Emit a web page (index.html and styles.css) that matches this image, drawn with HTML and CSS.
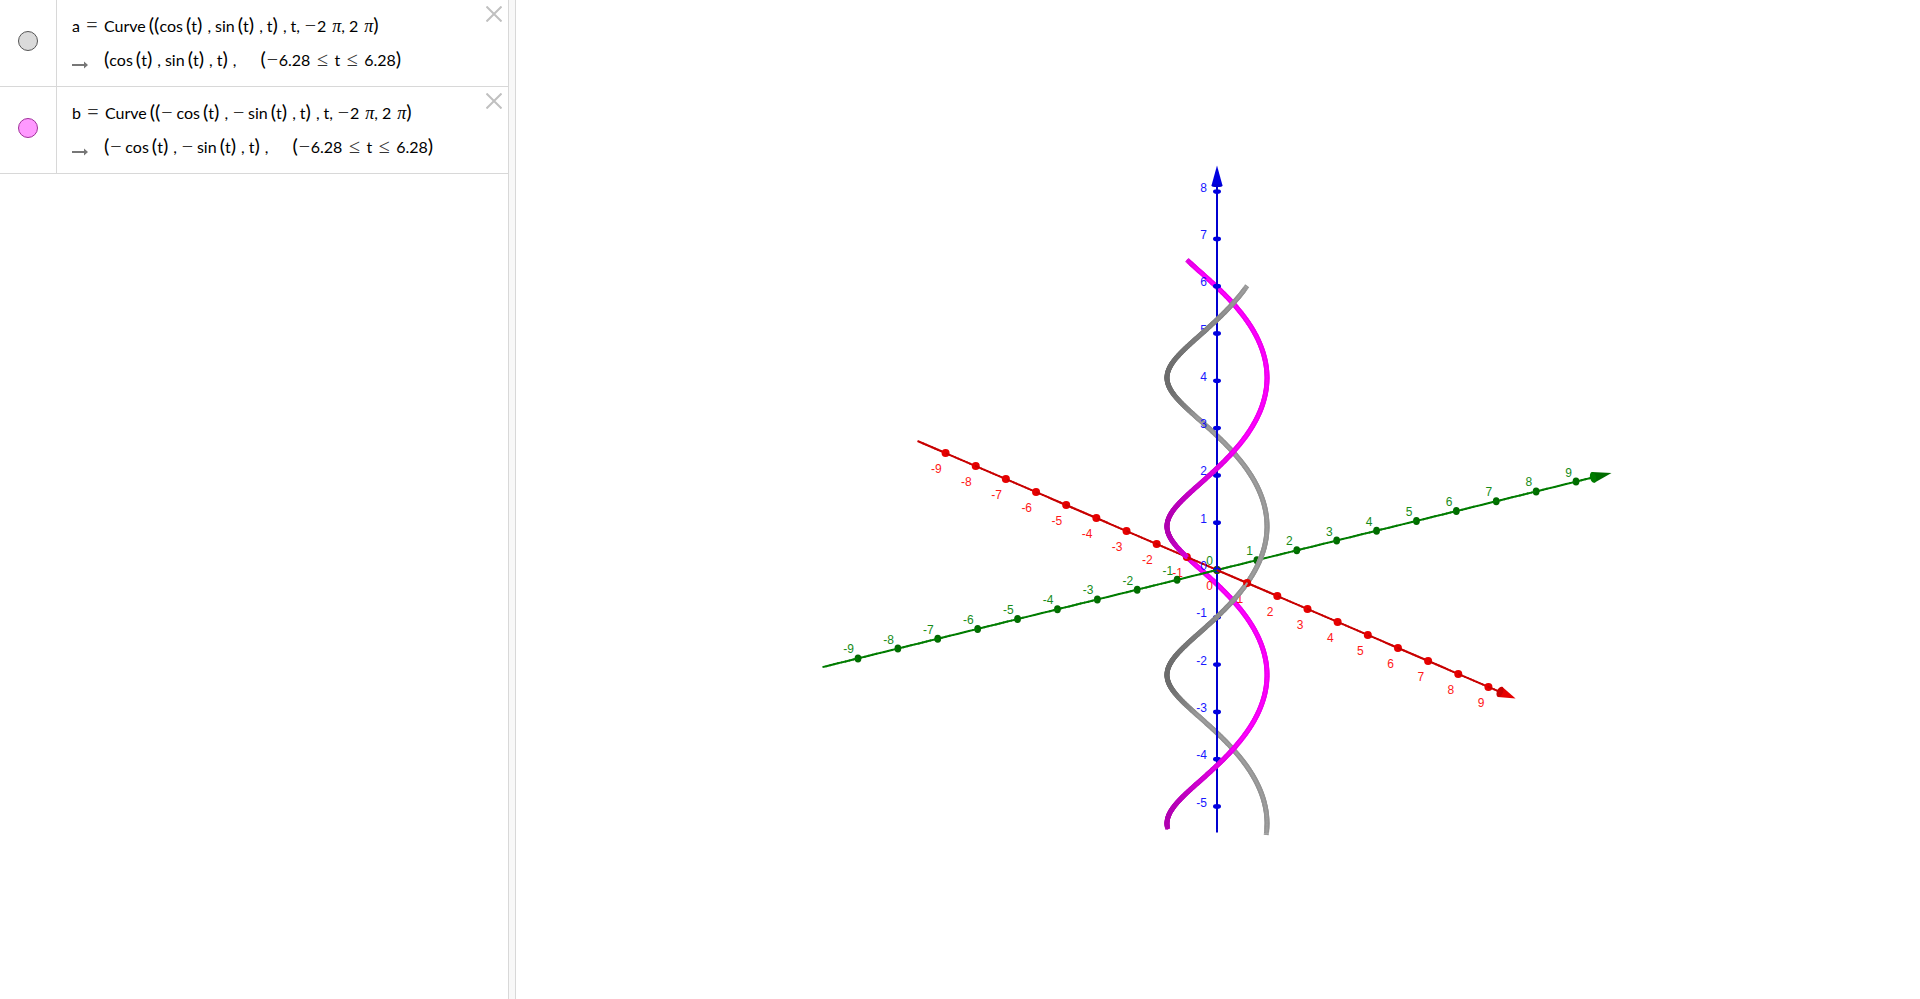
FILE: index.html
```html
<!DOCTYPE html>
<html lang="en">
<head>
<meta charset="utf-8">
<title>3D Calculator</title>
<link rel="stylesheet" href="styles.css">
</head>
<body>
<div class="app">
  <aside class="algebra" aria-label="Algebra">
    <section class="row">
      <div class="marble-cell"><button class="marble marble-a" type="button" aria-label="Show or hide a"></button></div>
      <div class="formulas">
        <div class="line"><span>a</span><span class="rel">=</span><span>Curve</span><span class="par gap">((</span><span>cos</span><span class="par gap">(</span>t<span class="par">)</span><span class="comma">,</span><span>sin</span><span class="par gap">(</span>t<span class="par">)</span><span class="comma">,</span>t<span class="par">)</span><span class="comma">,</span>t<span class="sep">,</span><span class="minus">−</span>2<span class="pi">π</span><span class="sep">,</span>2<span class="pi">π</span><span class="par">)</span></div>
        <div class="line"><svg class="arrow" viewBox="0 0 16 8" aria-hidden="true"><path d="M0 3h12V0.500l4 3.500-4 3.500V5H0z"/></svg><span class="par">(</span><span>cos</span><span class="par gap">(</span>t<span class="par">)</span><span class="comma">,</span><span>sin</span><span class="par gap">(</span>t<span class="par">)</span><span class="comma">,</span>t<span class="par">)</span><span class="comma">,</span><span class="par quad">(</span><span class="minus">−</span>6.28<span class="rel">≤</span>t<span class="rel">≤</span>6.28<span class="par">)</span></div>
      </div>
      <button class="close" type="button" aria-label="Delete a"><svg viewBox="0 0 16 16"><path d="M0.500 0.500l15 15M15.500 0.500l-15 15"/></svg></button>
    </section>
    <section class="row">
      <div class="marble-cell"><button class="marble marble-b" type="button" aria-label="Show or hide b"></button></div>
      <div class="formulas">
        <div class="line"><span>b</span><span class="rel">=</span><span>Curve</span><span class="par gap">((</span><span class="minus wide">−</span><span>cos</span><span class="par gap">(</span>t<span class="par">)</span><span class="comma">,</span><span class="minus wide">−</span><span>sin</span><span class="par gap">(</span>t<span class="par">)</span><span class="comma">,</span>t<span class="par">)</span><span class="comma">,</span>t<span class="sep">,</span><span class="minus">−</span>2<span class="pi">π</span><span class="sep">,</span>2<span class="pi">π</span><span class="par">)</span></div>
        <div class="line"><svg class="arrow" viewBox="0 0 16 8" aria-hidden="true"><path d="M0 3h12V0.500l4 3.500-4 3.500V5H0z"/></svg><span class="par">(</span><span class="minus wide">−</span><span>cos</span><span class="par gap">(</span>t<span class="par">)</span><span class="comma">,</span><span class="minus wide">−</span><span>sin</span><span class="par gap">(</span>t<span class="par">)</span><span class="comma">,</span>t<span class="par">)</span><span class="comma">,</span><span class="par quad">(</span><span class="minus">−</span>6.28<span class="rel">≤</span>t<span class="rel">≤</span>6.28<span class="par">)</span></div>
      </div>
      <button class="close" type="button" aria-label="Delete b"><svg viewBox="0 0 16 16"><path d="M0.500 0.500l15 15M15.500 0.500l-15 15"/></svg></button>
    </section>
  </aside>
  <div class="splitter"></div>
  <main class="view">
    <svg id="plot" class="plot" viewBox="-701 -570 1404 999" preserveAspectRatio="xMidYMid slice" role="img" aria-label="Two helices around the z axis"></svg>
  </main>
</div>
<script src="plot.js"></script>
</body>
</html>
```
FILE: styles.css
```css
* { box-sizing: border-box; }
body { margin: 0; background: #fff; color: #000; font-family: Lato, "Noto Sans", sans-serif; }
button { padding: 0; background: none; border: 0; cursor: pointer; }

.app { display: flex; height: 100vh; overflow: hidden; }
.algebra { flex: 0 0 508px; }
.splitter { flex: 0 0 8px; background: #f8f8f8; border: solid #d8d8d8; border-width: 0 1px; }
.view { flex: 1; min-width: 0; }

.row { display: flex; align-items: stretch; border-bottom: 1px solid #d8d8d8; }
.marble-cell { flex: 0 0 57px; display: flex; align-items: center; justify-content: center; border-right: 1px solid #d8d8d8; padding-bottom: 4px; }
.marble { width: 20px; height: 20px; border: 1px solid; border-radius: 50%; }
.marble-a { background: #dadada; border-color: #555; }
.marble-b { background: #ff99ff; border-color: #a0309a; }
.formulas { flex: 1; padding: 7px 0 11px 15px; }
.line { display: flex; align-items: baseline; height: 34px; font-size: 16px; line-height: 34px; white-space: nowrap; }
.close { align-self: flex-start; width: 16px; height: 16px; margin: 6px 6px 0 0; }
.close svg { display: block; width: 16px; height: 16px; fill: none; stroke: #c0c0c0; stroke-width: 2; }

.rel, .minus { font-family: "Liberation Serif", serif; font-size: 20px; text-align: center; color: #333; }
.rel { width: 24px; }
.par { font-size: 20px; }
.gap { margin-left: 3px; }
.comma { margin: 0 4px 0 5px; }
.sep { margin-right: 4px; }
.minus { width: 13px; }
.wide { margin-right: 3px; }
.pi { margin-left: 6px; font-family: "Liberation Serif", serif; font-size: 18px; font-style: italic; }
.quad { margin-left: 20px; }
.arrow { align-self: flex-end; width: 16px; height: 8px; margin: 0 16px 6px 0; fill: #777; }

.plot { display: block; width: 100%; height: 100%; }
.tick-label { font: 12px "Liberation Sans", Arial, sans-serif; text-anchor: end; opacity: 0.9; }
```
FILE: plot.js
```javascript
(function () {
  const NS = "http://www.w3.org/2000/svg";
  const plot = document.getElementById("plot");
  const items = [];

  // Screen position and distance towards the viewer of a point in space.
  function project(x, y, z) {
    return {
      x: 30.16 * x + 39.89 * y,
      y: 12.99 * x - 9.82 * y - 47.3 * z,
      depth: 37.7 * x - 28.5 * y + 16.3 * z
    };
  }

  function add(depth, tag, attrs, text) {
    const node = document.createElementNS(NS, tag);
    for (const key in attrs) node.setAttribute(key, attrs[key]);
    if (text !== undefined) node.textContent = text;
    items.push({ depth, node });
  }

  function segment(p, q, color, width, bias, cap) {
    add((p.depth + q.depth) / 2 + bias, "line", {
      x1: p.x.toFixed(2), y1: p.y.toFixed(2), x2: q.x.toFixed(2), y2: q.y.toFixed(2),
      stroke: color, "stroke-width": width, "stroke-linecap": cap
    });
  }

  const axes = [
    { dir: [1, 0, 0], min: -9.93, max: 9.9, from: -9, to: 9, line: "#c80000", dot: "#e60000", text: "#ff0000", rx: 4, ry: 4, dx: -4, dy: 20, head: 17, half: 5.5 },
    { dir: [0, 1, 0], min: -9.89, max: 9.89, from: -9, to: 9, line: "#007c00", dot: "#006c00", text: "#007f00", rx: 3.4, ry: 4, dx: -4, dy: -5, head: 19, half: 5.5 },
    { dir: [0, 0, 1], min: -5.55, max: 8.55, from: -5, to: 8, line: "#0000d0", dot: "#0000e0", text: "#0000ff", rx: 4, ry: 2.4, dx: -10, dy: 0, head: 20, half: 5.5 }
  ];

  for (const a of axes) {
    const at = t => project(a.dir[0] * t, a.dir[1] * t, a.dir[2] * t);
    const tip = at(a.max);
    const len = Math.hypot(tip.x, tip.y);
    const ux = tip.x / len, uy = tip.y / len;
    const end = a.max - a.head / (len / a.max);
    const steps = 200;
    for (let i = 0; i < steps; i++) {
      const t0 = a.min + (end - a.min) * i / steps;
      const t1 = a.min + (end - a.min) * (i + 1) / steps;
      segment(at(t0), at(t1), a.line, 2, 0, i ? "round" : "butt");
    }
    const bx = tip.x - ux * a.head, by = tip.y - uy * a.head;
    const deg = Math.atan2(uy, ux) * 180 / Math.PI;
    add(tip.depth, "path", {
      d: `M${tip.x} ${tip.y}L${bx - uy * a.half} ${by + ux * a.half}L${bx + uy * a.half} ${by - ux * a.half}Z`,
      fill: a.dot
    });
    add(tip.depth, "ellipse", {
      cx: bx, cy: by, rx: a.dir[2] ? 1.5 : 3, ry: a.half,
      transform: `rotate(${deg} ${bx} ${by})`, fill: a.line
    });
    for (let n = a.from; n <= a.to; n++) {
      const p = at(n);
      add(p.depth + 1, "ellipse", { cx: p.x, cy: p.y, rx: a.rx, ry: a.ry, fill: a.dot });
      add(p.depth, "text", { class: "tick-label", x: p.x + a.dx, y: p.y + a.dy, fill: a.text }, n);
    }
  }

  function mix(c0, c1, f) {
    return "rgb(" + c0.map((v, i) => Math.round(v + (c1[i] - v) * f)).join(",") + ")";
  }

  // Helix as a shaded tube, cut off at the lower edge of the drawing box.
  function helix(sign, dark, light) {
    const from = -5.54, to = 2 * Math.PI, steps = 500;
    const at = t => project(sign * Math.cos(t), sign * Math.sin(t), t);
    for (let i = 0; i < steps; i++) {
      const p = at(from + (to - from) * i / steps);
      const q = at(from + (to - from) * (i + 1) / steps);
      // Parts that run down to the right face the light more than the others.
      const falling = (q.x - p.x) * (q.y - p.y) > 0;
      const f = Math.min(1, Math.max(0, (p.x + 50) / (falling ? 30 : 75)));
      const cap = i < 3 || i > steps - 4 ? "butt" : "round";
      segment(p, q, mix(dark, light, f * 0.8), 5, 0, cap);
      segment(p, q, mix(dark, light, f), 2, 1, cap);
    }
  }
  helix(1, [108, 108, 108], [158, 158, 158]);
  helix(-1, [176, 0, 176], [255, 0, 255]);

  items.sort((a, b) => a.depth - b.depth);
  for (const item of items) plot.appendChild(item.node);
})();
```
